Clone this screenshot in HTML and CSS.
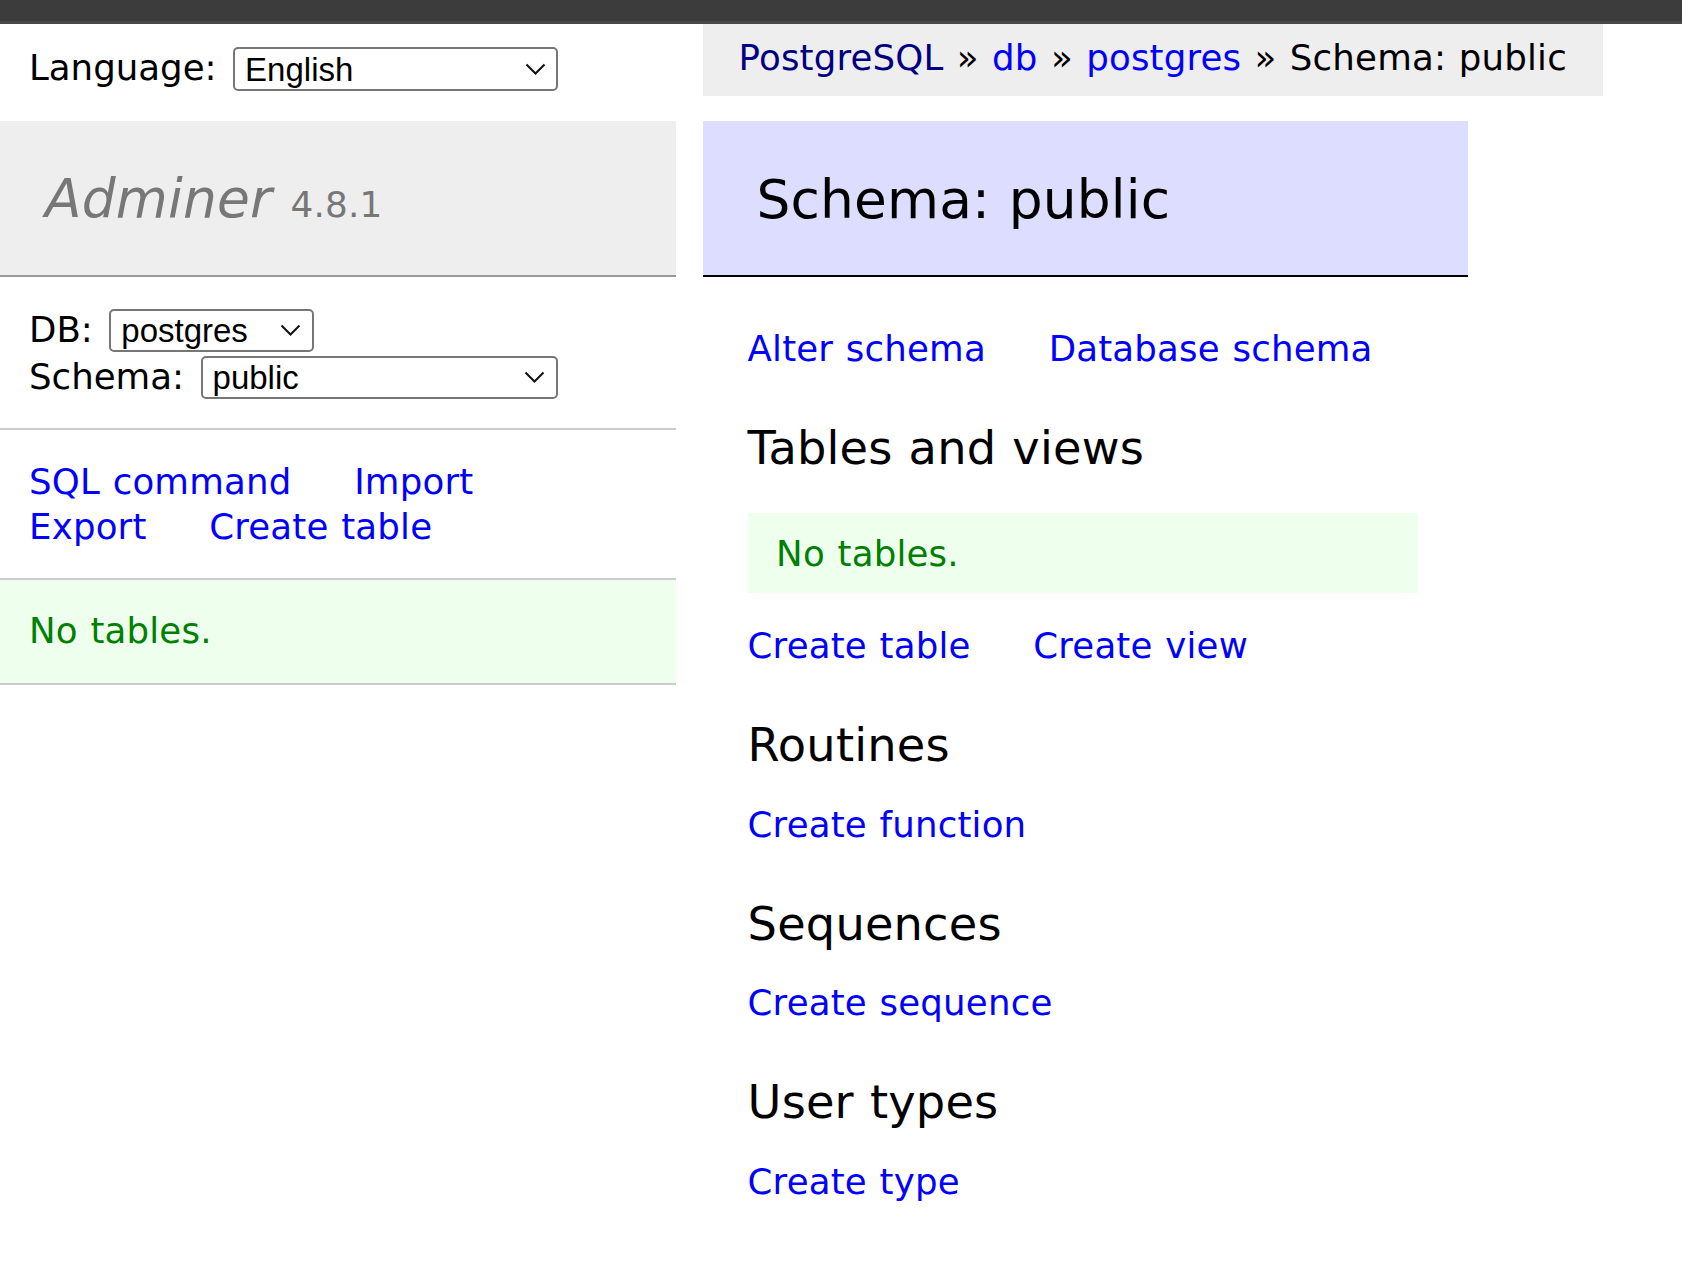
FILE: index.html
```html
<!DOCTYPE html>
<html lang="en">
<head>
<meta charset="utf-8">
<title>Schema: public - db - Adminer</title>
<link rel="stylesheet" href="styles.css">
</head>
<body>
<div class="chrome-bar"></div>
<div class="page">
  <form class="lang">
    <label class="field-label lang-label" for="lang-select">Language:</label>
    <span class="select-wrap select-lang">
      <select id="lang-select" class="sel"><option>English</option></select>
      <svg class="chev" viewBox="0 0 21 12" aria-hidden="true"><path d="M1.5 1.5 L10.5 10.5 L19.5 1.5"/></svg>
    </span>
  </form>

  <div class="breadcrumb-cell">
    <p class="breadcrumb"><a class="visited" href="#">PostgreSQL</a> <span class="sep">»</span> <a href="#">db</a> <span class="sep">»</span> <a href="#">postgres</a> <span class="sep">»</span> Schema: public</p>
  </div>

  <div class="menu">
    <h1><a class="logo" href="#">Adminer</a> <span class="version">4.8.1</span></h1>

    <form class="dbs">
      <div class="dbs-row">
        <label class="field-label row-label" for="db-select">DB:</label>
        <span class="select-wrap select-db">
          <select id="db-select" class="sel"><option>postgres</option></select>
          <svg class="chev" viewBox="0 0 21 12" aria-hidden="true"><path d="M1.5 1.5 L10.5 10.5 L19.5 1.5"/></svg>
        </span>
      </div>
      <div class="dbs-row">
        <label class="field-label row-label" for="schema-select">Schema:</label>
        <span class="select-wrap select-schema">
          <select id="schema-select" class="sel"><option>public</option></select>
          <svg class="chev" viewBox="0 0 21 12" aria-hidden="true"><path d="M1.5 1.5 L10.5 10.5 L19.5 1.5"/></svg>
        </span>
      </div>
    </form>

    <p class="menu-links"><a href="#">SQL command</a> <a href="#">Import</a><br><a href="#">Export</a> <a href="#">Create table</a></p>

    <p class="menu-msg">No tables.</p>
  </div>

  <div class="content">
    <h2>Schema: public</h2>
    <p class="links links-top"><a href="#">Alter schema</a> <a href="#">Database schema</a></p>

    <h3 class="h3-first">Tables and views</h3>
    <p class="message">No tables.</p>
    <p class="links links-after-msg"><a href="#">Create table</a> <a href="#">Create view</a></p>

    <h3>Routines</h3>
    <p class="links"><a href="#">Create function</a></p>

    <h3>Sequences</h3>
    <p class="links"><a href="#">Create sequence</a></p>

    <h3>User types</h3>
    <p class="links"><a href="#">Create type</a></p>
  </div>
</div>
</body>
</html>
```

FILE: styles.css
```css
html, body {
  margin: 0;
  padding: 0;
  background: #fff;
}

body {
  color: #000;
  font-family: "DejaVu Sans", Verdana, sans-serif;
  font-size: 35.6px;
  line-height: 1.25;
  letter-spacing: 0.005em;
  word-spacing: 0.034em;
}

a {
  color: #00f;
  text-decoration: none;
}

a.visited {
  color: #000080;
}

.chrome-bar {
  height: 21px;
  background: #3c3c3c;
  border-bottom: 3px solid #484848;
}

.page {
  display: grid;
  grid-template-columns: 676px 1fr;
  grid-template-rows: 96.7px auto;
}

/* ---------- language ---------- */
.lang {
  grid-column: 1;
  grid-row: 1;
  margin: 0;
  display: flex;
  align-items: flex-start;
  gap: 16.5px;
  padding: 12.4px 0 0 29px;
}

.field-label {
  line-height: 64px;
  white-space: nowrap;
  letter-spacing: 0;
}

.select-wrap {
  position: relative;
  display: inline-block;
  flex: none;
}

.sel {
  -webkit-appearance: none;
  appearance: none;
  display: block;
  box-sizing: border-box;
  margin: 0;
  border: 2px solid #767676;
  border-radius: 5px;
  background: #fff;
  color: #000;
  font-family: "Liberation Sans", Arial, sans-serif;
  font-size: 33px;
  letter-spacing: 0;
  padding: 0 40px 0 10px;
  outline: none;
}

.chev {
  position: absolute;
  right: 12.5px;
  top: 50%;
  width: 21px;
  height: 12px;
  margin-top: -6px;
  pointer-events: none;
}

.chev path {
  fill: none;
  stroke: #111;
  stroke-width: 2;
}

.select-lang {
  margin-top: 10.9px;
}

.select-lang .sel {
  width: 325px;
  height: 43.7px;
}

.select-db .sel {
  width: 204.3px;
  height: 43px;
}

.select-schema .sel {
  width: 357.3px;
  height: 43px;
}

/* ---------- breadcrumb ---------- */
.breadcrumb-cell {
  grid-column: 2;
  grid-row: 1;
}

.breadcrumb {
  display: inline-block;
  box-sizing: border-box;
  margin: 0 0 0 27px;
  height: 72px;
  padding: 2px 35.6px 0;
  line-height: 64px;
  background: #eee;
  white-space: nowrap;
}

.sep {
  margin: 0 0.6px;
}

/* ---------- menu ---------- */
.menu {
  grid-column: 1;
  grid-row: 2;
}

.menu h1 {
  margin: 0;
  padding: 45.7px 30px 41.85px 45px;
  font-size: 53.4px;
  line-height: 66.75px;
  font-weight: normal;
  color: #777;
  background: #eee;
  border-bottom: 2px solid #999;
  white-space: nowrap;
}

.logo {
  color: #777;
  font-style: italic;
}

.version {
  font-size: 35.8px;
  line-height: 1;
  color: #777;
}

.dbs {
  margin: 0;
  padding: 28px 26.5px 28.7px 29px;
  border-bottom: 2px solid #ccc;
}

.dbs-row {
  display: flex;
  align-items: flex-start;
  gap: 16.5px;
  height: 47px;
}

.row-label {
  line-height: 47px;
  padding-top: 1px;
}

.select-db,
.select-schema {
  margin-top: 4px;
}

.menu-links {
  margin: 0;
  padding: 30.7px 26.5px 28.3px 29px;
  line-height: 44.5px;
  border-bottom: 2px solid #ccc;
  white-space: nowrap;
}

.menu-links a,
.links a {
  margin-right: 50px;
  white-space: nowrap;
}

.menu-msg {
  margin: 0;
  padding: 29.7px 26.5px 28.8px 29px;
  line-height: 44.5px;
  color: #008000;
  background: #efe;
  border-bottom: 2px solid #ccc;
}

/* ---------- content ---------- */
.content {
  grid-column: 2;
  grid-row: 2;
  width: 720.1px;
  padding: 0 0 40px 71.6px;
}

.content h2 {
  margin: 0 0 0 -44.6px;
  padding: 46.7px 53.4px 40.9px;
  font-size: 53.4px;
  line-height: 66.75px;
  font-weight: normal;
  color: #000;
  background: #ddf;
  border-bottom: 2px solid #000;
}

.links {
  margin: 28px 0 0;
  line-height: 44.5px;
}

.links-top {
  margin-top: 50.1px;
}

.links-after-msg {
  margin-top: 30.4px;
}

.content h3 {
  margin: 48.5px 0 0;
  font-size: 46.3px;
  line-height: 57.9px;
  font-weight: normal;
}

.content h3.h3-first {
  margin-top: 48.4px;
}

.message {
  margin: 35.4px 49.4px 0 0;
  padding: 18.8px 28.5px 16.7px;
  line-height: 44.5px;
  color: #008000;
  background: #efe;
}
```
